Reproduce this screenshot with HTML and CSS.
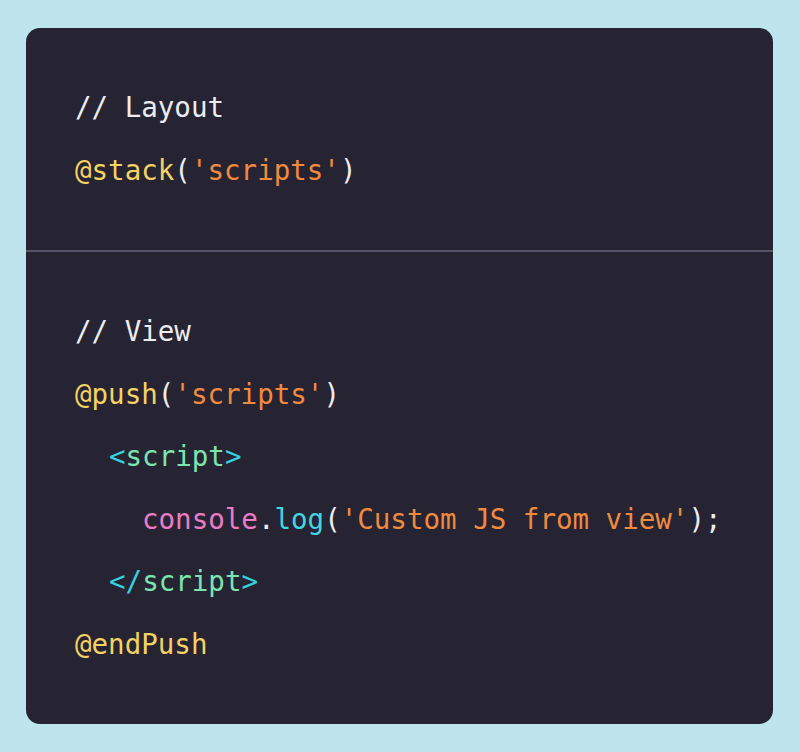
FILE: index.html
```html
<!DOCTYPE html>
<html lang="en">
<head>
<meta charset="utf-8">
<title>Blade stack / push</title>
<link rel="stylesheet" href="styles.css">
</head>
<body>
<main class="page">
  <div class="card">
    <section class="block">
      <div class="line"><span class="comment">// Layout</span></div>
      <div class="line"><span class="dir">@stack</span><span class="punc">(</span><span class="str">'scripts'</span><span class="punc">)</span></div>
    </section>
    <hr class="divider">
    <section class="block">
      <div class="line"><span class="comment">// View</span></div>
      <div class="line"><span class="dir">@push</span><span class="punc">(</span><span class="str">'scripts'</span><span class="punc">)</span></div>
      <div class="line indent1"><span class="br">&lt;</span><span class="tag">script</span><span class="br">&gt;</span></div>
      <div class="line indent2"><span class="obj">console</span><span class="punc">.</span><span class="fn">log</span><span class="punc">(</span><span class="str">'Custom JS from view'</span><span class="punc">);</span></div>
      <div class="line indent1"><span class="br">&lt;/</span><span class="tag">script</span><span class="br">&gt;</span></div>
      <div class="line"><span class="dir">@endPush</span></div>
    </section>
  </div>
</main>
</body>
</html>
```

FILE: styles.css
```css
html, body {
  margin: 0;
  padding: 0;
  background: #bee5ee;
}

.page {
  padding: 28px 27px 28px 26px;
}

.card {
  background: #262433;
  border-radius: 14px;
  overflow: hidden;
}

.block {
  padding: 48px 48px 49px 49px;
}

.divider {
  margin: 0;
  border: 0;
  height: 2px;
  background: #56546a;
}

.line {
  font-family: "DejaVu Sans Mono", "Liberation Mono", monospace;
  font-size: 27.5px;
  line-height: 62.5px;
  white-space: pre;
  color: #ececf1;
}

.indent1 { padding-left: 34px; }
.indent2 { padding-left: 67px; }

.comment { color: #ececf1; }
.dir { color: #f4d263; }
.str { color: #f08a3e; }
.punc { color: #ececf1; }
.br { color: #33d3df; }
.tag { color: #7ce4b0; }
.obj { color: #ea7cc6; }
.fn { color: #43d6e0; }
```
